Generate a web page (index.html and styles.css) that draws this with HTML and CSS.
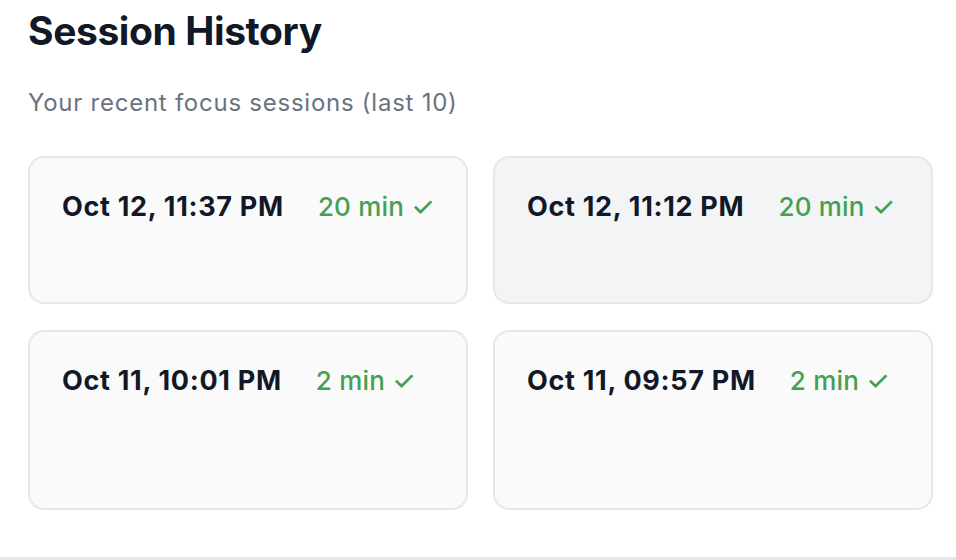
FILE: index.html
```html
<!DOCTYPE html>
<html lang="en">
<head>
<meta charset="utf-8">
<title>Session History</title>
<link rel="stylesheet" href="styles.css">
</head>
<body>
<main class="page">
  <h1 class="title">Session History</h1>
  <p class="subtitle">Your recent focus sessions (last 10)</p>
  <div class="grid">
    <div class="card">
      <span class="date">Oct 12, 11:37 PM</span>
      <span class="dur">20 min ✓</span>
    </div>
    <div class="card card-hover">
      <span class="date">Oct 12, 11:12 PM</span>
      <span class="dur">20 min ✓</span>
    </div>
    <div class="card card-tall">
      <span class="date">Oct 11, 10:01 PM</span>
      <span class="dur">2 min ✓</span>
    </div>
    <div class="card card-tall">
      <span class="date">Oct 11, 09:57 PM</span>
      <span class="dur">2 min ✓</span>
    </div>
  </div>
</main>
<div class="divider"></div>
</body>
</html>
```

FILE: styles.css
```css
html, body {
  margin: 0;
  padding: 0;
  background: #ffffff;
}
body {
  font-family: Inter, "Noto Sans", sans-serif;
  color: #111827;
  width: 956px;
  height: 560px;
  overflow: hidden;
  display: flex;
  flex-direction: column;
}
.page {
  flex: 1;
  padding: 8px 24px 0 28px;
}
.title {
  margin: 0;
  font-size: 39px;
  line-height: 46px;
  font-weight: 700;
  letter-spacing: -0.4px;
  color: #111827;
}
.subtitle {
  margin: 34px 0 0 0;
  font-size: 24px;
  line-height: 30px;
  letter-spacing: 0.75px;
  color: #6b7280;
}
.grid {
  margin-top: 38px;
  display: grid;
  grid-template-columns: 440px 440px;
  column-gap: 25px;
  row-gap: 26px;
}
.card {
  box-sizing: border-box;
  height: 148px;
  border: 2px solid #e5e7eb;
  border-radius: 16px;
  background: #fafafa;
  padding: 32px 8px 32px 32px;
  display: flex;
  align-items: flex-start;
  gap: 34px;
  white-space: nowrap;
}
.card-hover {
  background: #f3f4f6;
}
.card-tall {
  height: 180px;
}
.date {
  flex: none;
  font-size: 27px;
  line-height: 34px;
  font-weight: 700;
  letter-spacing: 0.7px;
  color: #111827;
}
.dur {
  flex: none;
  font-size: 26px;
  line-height: 34px;
  font-weight: 500;
  letter-spacing: 0.2px;
  color: #45a052;
}
.divider {
  height: 3px;
  background: #e5e7eb;
}
```
